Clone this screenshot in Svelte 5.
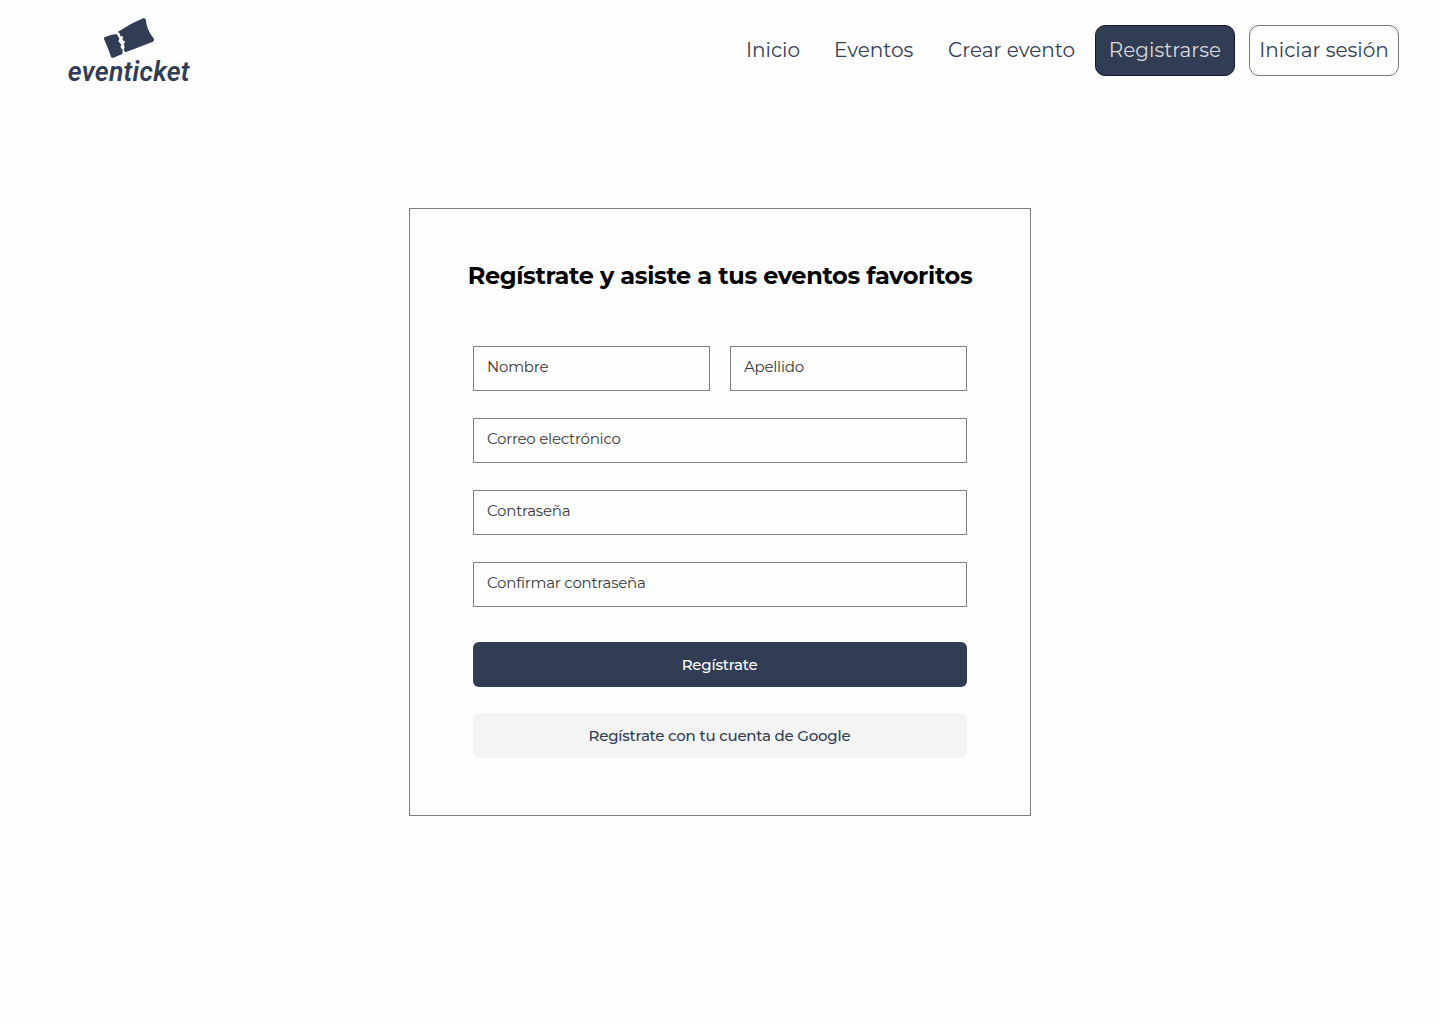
<script>
  const links = [
    { label: 'Inicio', kind: 'home' },
    { label: 'Eventos', kind: 'events' },
    { label: 'Crear evento', kind: 'create' }
  ];
  const fields = [
    { label: 'Nombre', kind: 'name half' },
    { label: 'Apellido', kind: 'surname half' },
    { label: 'Correo electrónico', kind: 'mail' },
    { label: 'Contraseña', kind: 'pass' },
    { label: 'Confirmar contraseña', kind: 'confirm' }
  ];
</script>

<div class="page">
  <header>
    <a class="logo" href="#inicio" aria-label="eventicket">
      <svg width="130" height="80" viewBox="0 0 130 80">
        <g transform="translate(33.7 0) scale(.33333)">
          <path d="M16 69Q11 70 13 75Q25 102 34 128Q36 133 41 131L68 120L69 108L62 99L65 92L56 82L59 74L55 67L50 60Q34 61 16 69Z" />
          <path d="M54 54Q91 29 130 13Q136 11 138 16Q140 48 163 75Q165 81 158 84Q114 101 77 115L72 107L75 99L72 90L77 84L68 77L71 68L62 66L60 58Z" />
        </g>
        <text x="1.8" y="67.2" textLength="122" lengthAdjust="spacingAndGlyphs">eventicket</text>
      </svg>
    </a>
    <nav>
      {#each links as link}
        <a class="link {link.kind}" href="#{link.kind}"><span>{link.label}</span></a>
      {/each}
      <a class="button primary" href="#registro"><span>Registrarse</span></a>
      <a class="button outline" href="#sesion"><span>Iniciar sesión</span></a>
    </nav>
  </header>

  <main>
    <h1><span>Regístrate y asiste a tus eventos favoritos</span></h1>
    <form>
      {#each fields as field}
        <div class="field {field.kind}"><span>{field.label}</span></div>
      {/each}
      <button class="submit" type="button"><span>Regístrate</span></button>
      <button class="google" type="button"><span>Regístrate con tu cuenta de Google</span></button>
    </form>
  </main>
</div>

<style>
  :global(body) { background: #fefefe; }
  .page, .page * { box-sizing: border-box; }
  .page {
    height: 1024px;
    overflow: hidden;
    background: #fefefe;
    font-family: Montserrat, Inter, sans-serif;
    color: #313d55;
  }
  header {
    height: 100px;
    padding: 14px 41px 0 66px;
    display: flex;
    justify-content: space-between;
  }
  .logo { width: 130px; height: 80px; }
  .logo svg { display: block; fill: #313d55; overflow: visible; }
  .logo text { font: italic 600 27.5px Roboto, sans-serif; letter-spacing: .3px; }
  nav { display: flex; margin-top: 11px; height: 51px; font-size: 20px; font-weight: 400; }
  nav a { color: #313d55; text-decoration: none; display: flex; align-items: center; white-space: nowrap; }
  nav span { margin-top: -2px; }
  .home { width: 88px; }
  .events { width: 114px; }
  .create { width: 147px; }
  .button { border: 1px solid #777; border-radius: 10px; justify-content: center; }
  .primary { width: 140px; background: #313d55; border-color: #111a2b; color: #d9d9d9; margin-right: 14px; }
  .outline { width: 150px; }
  main {
    width: 622px;
    height: 608px;
    margin: 108px auto 0;
    border: 1px solid #7d7d7d;
    padding: 49px 63px 0;
  }
  h1 {
    margin: 0 -20px;
    height: 36px;
    color: #000;
    font-size: 24px;
    line-height: 36px;
    font-weight: 700;
    text-align: center;
    white-space: nowrap;
    letter-spacing: -.015em;
  }
  form { display: grid; grid-template-columns: 1fr 1fr; column-gap: 20px; row-gap: 27px; margin-top: 52px; }
  .field {
    grid-column: span 2;
    height: 45px;
    border: 1px solid #808080;
    padding: 10px 13px 0;
    font-size: 15px;
    line-height: 20px;
    font-weight: 400;
    color: #3a3a3a;
    letter-spacing: -.015em;
  }
  .half { grid-column: span 1; }
  button {
    grid-column: span 2;
    height: 45px;
    padding: 0 1px 0 0;
    border: 0;
    border-radius: 6px;
    font: 500 15px Montserrat, Inter, sans-serif;
    letter-spacing: -.015em;
  }
  .submit { margin-top: 8px; background: #313d55; color: #fff; }
  .google { margin-top: -1px; background: #f4f4f4; color: #313d55; }
</style>
